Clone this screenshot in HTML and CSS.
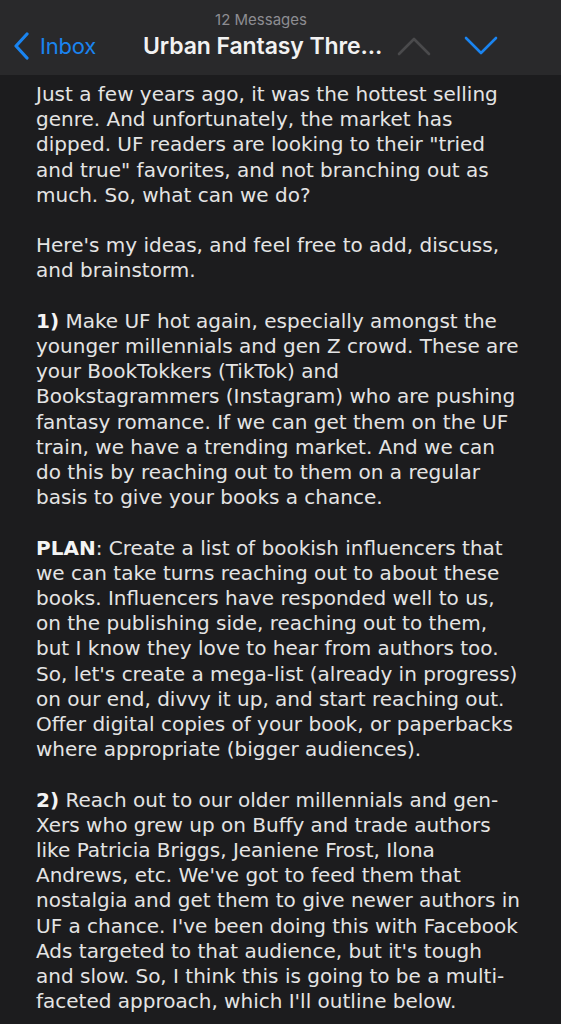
FILE: index.html
```html
<!DOCTYPE html>
<html>
<head>
<meta charset="utf-8">
<link rel="stylesheet" href="styles.css">
</head>
<body>
<header class="bar">
  <div class="count">12 Messages</div>
  <div class="row">
    <div class="back">
      <svg class="back-icon" width="18" height="28" viewBox="0 0 18 28"><path d="M15 2 L4 14 L15 26" fill="none" stroke="#1a84f0" stroke-width="3.2" stroke-linecap="round" stroke-linejoin="round"/></svg>
      <span class="back-label">Inbox</span>
    </div>
    <div class="title">Urban Fantasy Thre...</div>
    <div class="arrows">
      <svg width="34" height="22" viewBox="0 0 34 22"><path d="M2 19 L17 4 L32 19" fill="none" stroke="#4a4a4c" stroke-width="2.6" stroke-linecap="round" stroke-linejoin="round"/></svg>
      <svg width="34" height="22" viewBox="0 0 34 22"><path d="M2 3 L17 18 L32 3" fill="none" stroke="#1a84f0" stroke-width="2.6" stroke-linecap="round" stroke-linejoin="round"/></svg>
    </div>
  </div>
</header>
<main class="mail">
  <p>Just a few years ago, it was the hottest selling<br>genre. And unfortunately, the market has<br>dipped. UF readers are looking to their "tried<br>and true" favorites, and not branching out as<br>much. So, what can we do?</p>
  <p>Here's my ideas, and feel free to add, discuss,<br>and brainstorm.</p>
  <p><b>1)</b> Make UF hot again, especially amongst the<br>younger millennials and gen Z crowd. These are<br>your BookTokkers (TikTok) and<br>Bookstagrammers (Instagram) who are pushing<br>fantasy romance. If we can get them on the UF<br>train, we have a trending market. And we can<br>do this by reaching out to them on a regular<br>basis to give your books a chance.</p>
  <p><b>PLAN</b>: Create a list of bookish influencers that<br>we can take turns reaching out to about these<br>books. Influencers have responded well to us,<br>on the publishing side, reaching out to them,<br>but I know they love to hear from authors too.<br>So, let's create a mega-list (already in progress)<br>on our end, divvy it up, and start reaching out.<br>Offer digital copies of your book, or paperbacks<br>where appropriate (bigger audiences).</p>
  <p><b>2)</b> Reach out to our older millennials and gen-<br>Xers who grew up on Buffy and trade authors<br>like Patricia Briggs, Jeaniene Frost, Ilona<br>Andrews, etc. We've got to feed them that<br>nostalgia and get them to give newer authors in<br>UF a chance. I've been doing this with Facebook<br>Ads targeted to that audience, but it's tough<br>and slow. So, I think this is going to be a multi-<br>faceted approach, which I'll outline below.</p>
</main>
</body>
</html>
```
FILE: styles.css
```css
html, body {
  margin: 0;
  padding: 0;
  background: #1c1c1e;
  height: 1024px;
  overflow: hidden;
}
.bar {
  height: 75px;
  background: #29292b;
  box-sizing: border-box;
  padding-top: 11px;
  font-family: Inter, "Noto Sans", sans-serif;
}
.count {
  text-align: center;
  color: #8d8d92;
  font-size: 15px;
  line-height: 17px;
  padding-right: 39px;
}
.row {
  display: flex;
  align-items: center;
  height: 36px;
  padding-left: 12px;
}
.back {
  display: flex;
  align-items: center;
  gap: 10px;
  width: 131px;
}
.back-icon {
  display: block;
}
.back-label {
  color: #1a84f0;
  font-size: 22px;
  letter-spacing: -0.2px;
}
.title {
  color: #f2f2f2;
  font-size: 23px;
  font-weight: 600;
  width: 254px;
  letter-spacing: -0.1px;
}
.arrows {
  display: flex;
  gap: 33px;
}
.arrows svg {
  display: block;
}
.mail {
  padding: 7px 0 0 36px;
  font-family: "DejaVu Sans", Verdana, sans-serif;
  font-size: 20px;
  line-height: 25.2px;
  color: #e4e4e4;
}
.mail p {
  margin: 0 0 25.2px;
  white-space: nowrap;
}
.mail b {
  color: #f4f4f4;
  font-weight: bold;
}
```
